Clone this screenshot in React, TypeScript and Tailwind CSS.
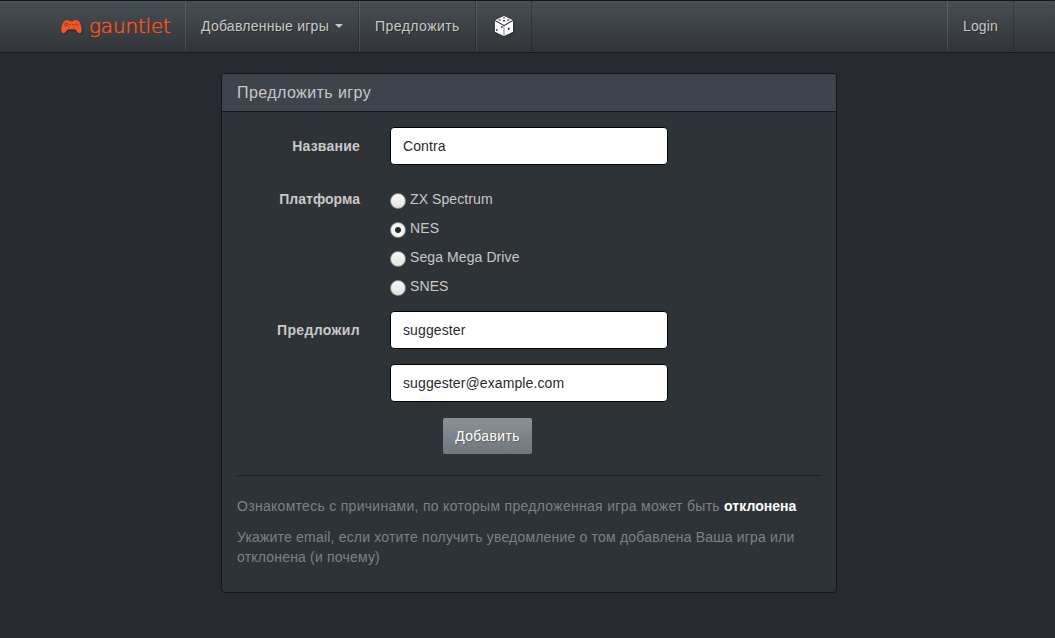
import type { ReactNode } from "react";

function Gamepad() {
  return (
    <svg className="h-[15px] w-[21px] drop-shadow-[1px_1px_1px_rgba(0,0,0,0.3)]" viewBox="0 0 21 15">
      <path fill="#fb5420" d="M2.800 2.500 4.600 1.200h3l1.200 1h3.400l1.200-1h3l1.800 1.300C19.600 4.500 20.700 8 20.700 11c0 2-.9 3.200-2.200 3.200-1.800 0-2.700-2.200-4.400-3.900H6.900c-1.700 1.700-2.600 3.900-4.400 3.900C1.200 14.200.3 13 .3 11c0-3 1.100-6.500 2.500-8.500Z" />
      <circle cx="5.200" cy="5.500" r="1.500" fill="none" stroke="#6b4538" strokeWidth="1" />
      <path d="M15.800 3.500v1.200M15.800 6.300v1.200M13.800 5.500H15M16.600 5.500h1.200M8.500 5.500h1.200M11.300 5.500h1.200M7.800 8h1.200M12 8h1.200" stroke="#6b4538" strokeWidth="1" />
    </svg>
  );
}

function Die() {
  return (
    <svg className="h-5 w-[18px] drop-shadow-[1px_1px_1px_rgba(0,0,0,0.3)]" viewBox="0 0 18 20">
      <path fill="#fff" d="m9 0 8.600 4L9 8.900.4 4ZM0 5l8.700 4.900V20L0 15.800ZM18 5 9.300 9.900V20L18 15.800Z" />
      <g fill="#3b4045">
        <ellipse cx="9" cy="1.800" rx="1.100" ry=".6" />
        <ellipse cx="4.700" cy="4" rx="1.300" ry=".7" />
        <ellipse cx="13.300" cy="4" rx="1.300" ry=".7" />
        <ellipse cx="9" cy="4.700" rx="1.400" ry=".7" />
        <ellipse cx="1.900" cy="14" rx=".8" ry="1.200" />
        <ellipse cx="6.900" cy="11" rx=".8" ry="1.200" />
        <ellipse cx="13.700" cy="12.700" rx="1" ry="1.300" />
      </g>
    </svg>
  );
}

function NavItem({ className, children }: { className: string; children: ReactNode }) {
  return (
    <a className={`flex h-[50px] items-center border-r border-l border-r-black/20 border-l-white/10 [text-shadow:1px_1px_1px_rgba(0,0,0,0.3)] ${className}`}>
      {children}
    </a>
  );
}

function Field({ label, labelClass = "", value }: { label?: string; labelClass?: string; value: string }) {
  return (
    <div className="mb-[15px] flex h-[38px] items-center">
      <label className={`w-[123px] text-right font-bold ${labelClass}`}>{label}</label>
      <input
        defaultValue={value}
        className="ml-[30px] h-[38px] w-[278px] rounded-[4px] border border-black bg-white px-3 text-[14px] tracking-[0.110px] text-[#272b30] outline-none"
      />
    </div>
  );
}

const platforms = ["ZX Spectrum", "NES", "Sega Mega Drive", "SNES"];

export default function App() {
  return (
    <div className="min-h-[638px] bg-[#272b30] font-['Liberation_Sans',Arial,sans-serif] text-[14px] leading-5 text-[#c8c8c8]">
      <nav className="flex h-[53px] border-y border-[#17191c] bg-[linear-gradient(#484e55,#3a3f44_60%,#313539)] whitespace-nowrap">
        <a className="flex w-[185px] items-center pl-[61px] text-[#fb5420]">
          <Gamepad />
          <span className="mb-0.5 ml-[7px] font-['DejaVu_Sans_Light','DejaVu_Sans',sans-serif] text-[20px] font-extralight tracking-[-0.180px] [-webkit-text-stroke:0.5px_#fb5420] [text-shadow:1px_1px_1px_rgba(0,0,0,0.3)]">gauntlet</span>
        </a>
        <NavItem className="w-[174px] pl-[15px]">
          <span className="tracking-[0.250px]">Добавленные игры</span>
          <span className="ml-[6px] border-x-4 border-t-4 border-x-transparent border-t-[#c8c8c8]" />
        </NavItem>
        <NavItem className="w-[117px] pl-[15px] tracking-[0.450px]">Предложить</NavItem>
        <NavItem className="w-14 pl-[18px]"><Die /></NavItem>
        <div className="grow" />
        <NavItem className="mr-[41px] w-[67px] pl-[15px] tracking-[0.150px]">Login</NavItem>
      </nav>
      <main className="mt-5 ml-[221px] h-[520px] w-[616px] rounded-[4px] border border-[#141619] bg-[#2e3338]">
        <header className="flex h-[38px] items-center rounded-t-[3px] border-b border-[#141619] bg-[#3e444c] px-[15px] text-[16px]">
          <h1 className="tracking-[0.420px]">Предложить игру</h1>
        </header>
        <div className="px-[15px] pt-[15px]">
          <Field label="Название" labelClass="tracking-[0.220px]" value="Contra" />
          <div className="flex h-[131px] pt-[9px]">
            <span className="w-[123px] text-right font-bold tracking-[0.030px]">Платформа</span>
            <div className="ml-[30px] flex flex-col gap-[9px]">
              {platforms.map((name) => (
                <label key={name} className="flex h-5 items-center tracking-[0.090px]">
                  <input
                    type="radio"
                    name="platform"
                    defaultChecked={name === "NES"}
                    className="mt-[3px] mr-1 size-4 appearance-none rounded-full border border-[#8b8b89] bg-[linear-gradient(#fafafa,#e2e2e0)] checked:bg-[radial-gradient(circle,#25292b_2.500px,#f2f2f1_3.500px)]"
                  />
                  {name}
                </label>
              ))}
            </div>
          </div>
          <Field label="Предложил" labelClass="tracking-[0.350px]" value="suggester" />
          <Field value="suggester@example.com" />
          <button className="mt-4 ml-[206px] block h-9 w-[89px] rounded-[2px] bg-[linear-gradient(#8a9196,#7a8288_60%,#70787d)] text-white [text-shadow:1px_1px_1px_rgba(0,0,0,0.3)]">
            <span className="tracking-[0.350px]">Добавить</span>
          </button>
          <hr className="mt-[21px] mb-5 border-[#1c1e22]" />
          <div className="whitespace-nowrap text-[#7a8288]">
            <p className="tracking-[0.290px]">Ознакомтесь с причинами, по которым предложенная игра может быть <a className="font-bold tracking-[0.020px] text-white">отклонена</a></p>
            <p className="mt-[11px] tracking-[0.190px]">Укажите email, если хотите получить уведомление о том добавлена Ваша игра или<br />отклонена (и почему)</p>
          </div>
        </div>
      </main>
    </div>
  );
}
